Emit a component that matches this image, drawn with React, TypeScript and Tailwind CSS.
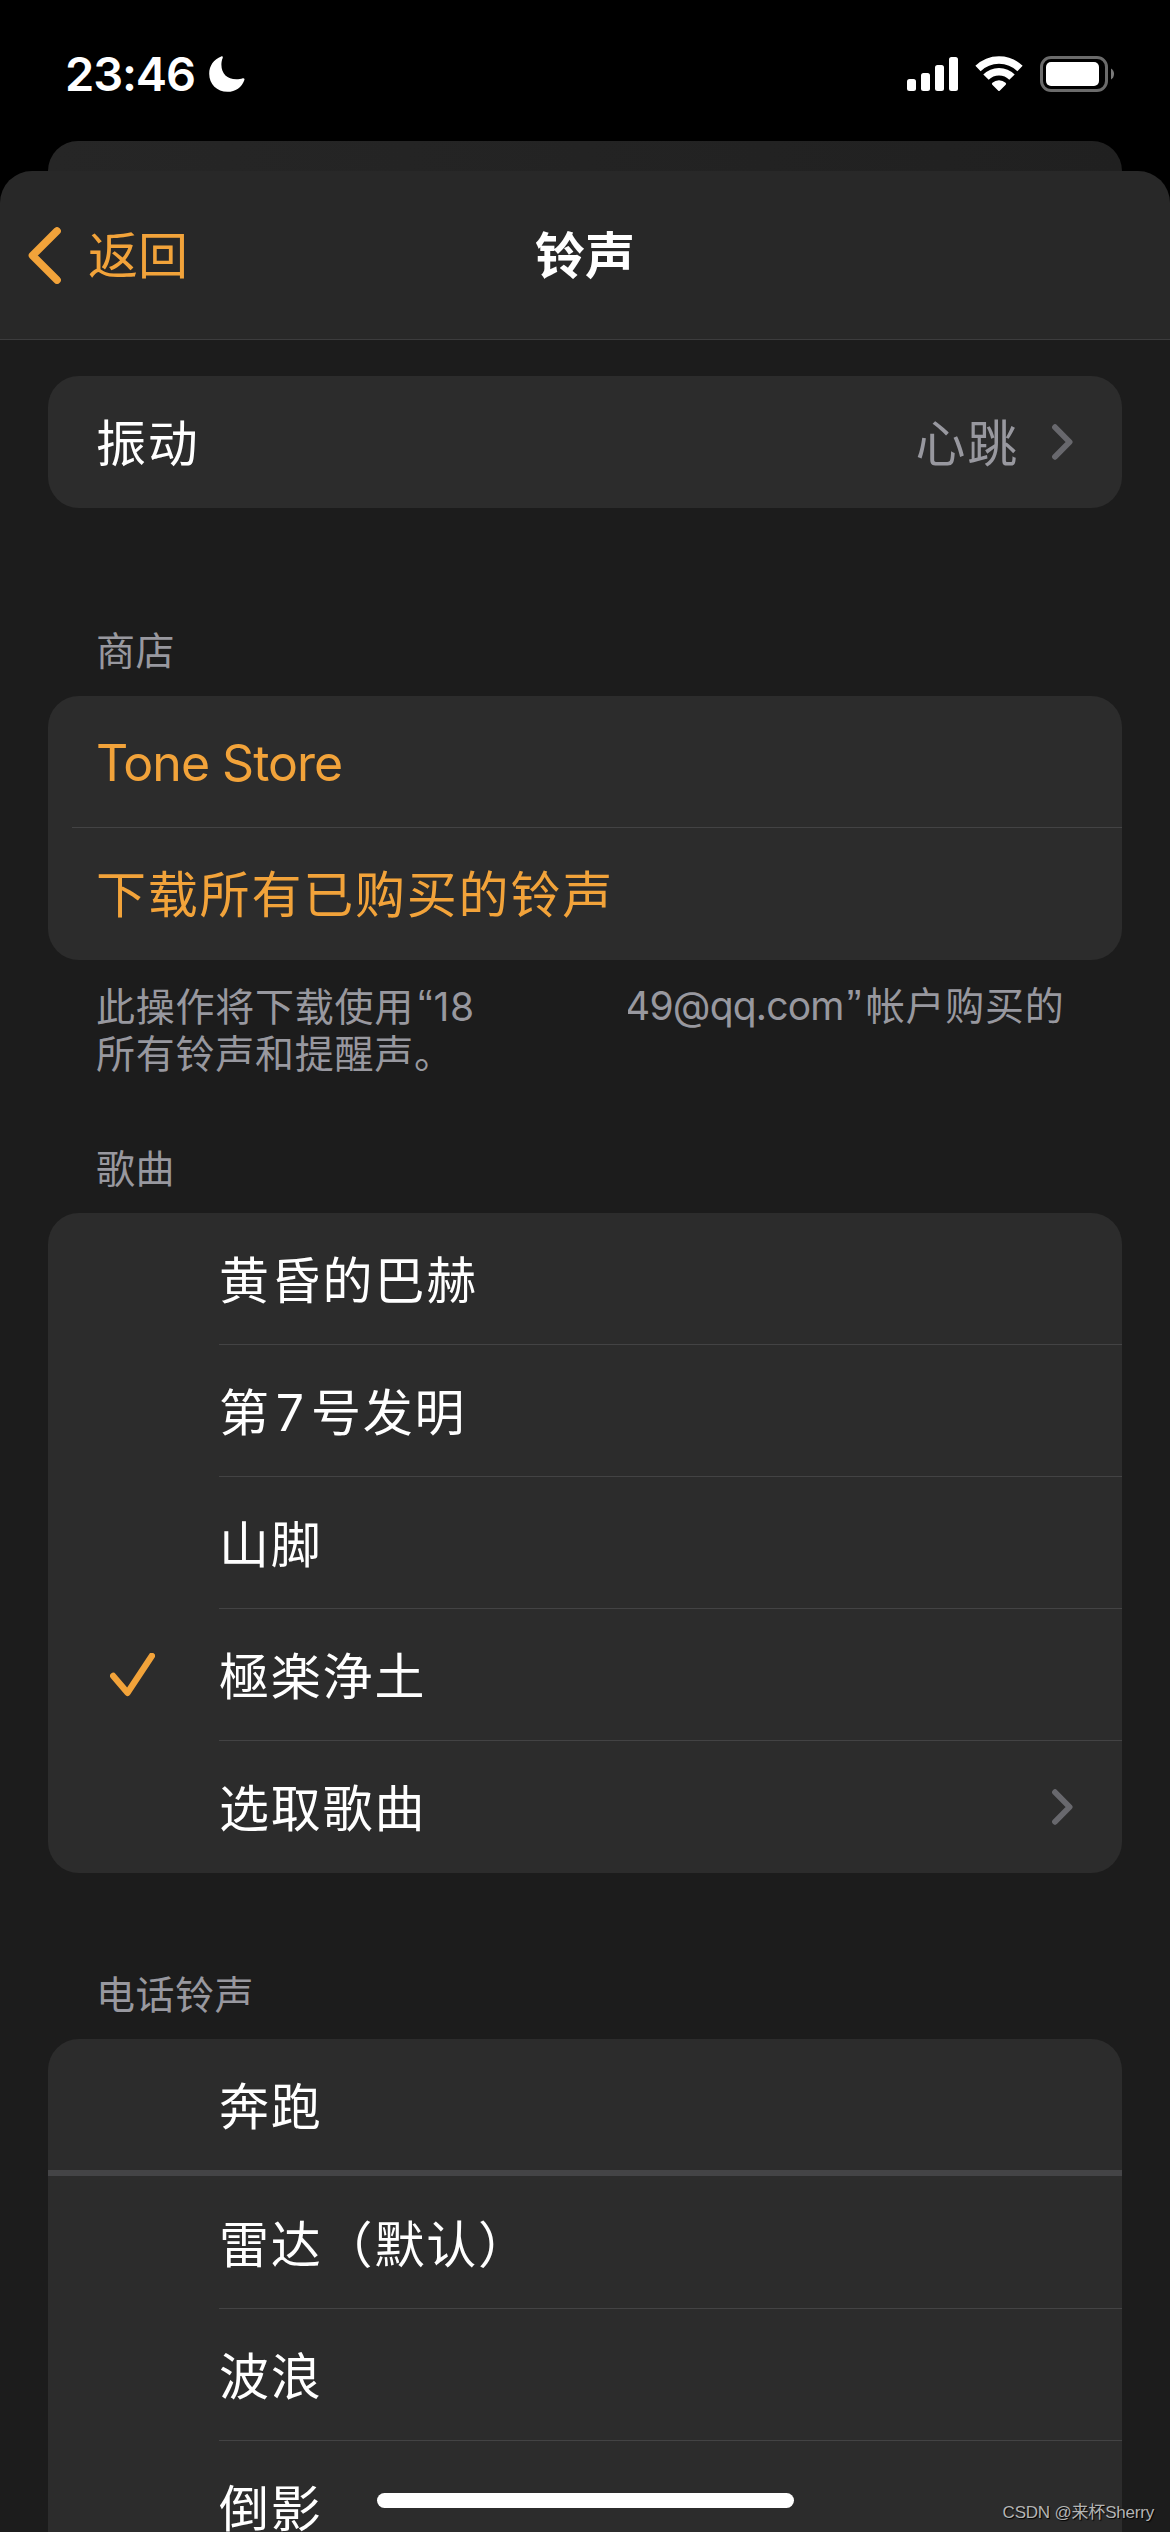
import React from "react";

const separator = "absolute bottom-0 right-0 h-px bg-[#434344]";

function Chevron() {
  return (
    <svg className="h-9 w-[21px] shrink-0" viewBox="0 0 21 36" fill="none">
      <path d="M3 3.200 17.600 18 3 32.800" stroke="#68686d" strokeWidth="5.800" strokeLinecap="round" strokeLinejoin="round" />
    </svg>
  );
}

function Check() {
  return (
    <svg className="h-[44px] w-[45px]" viewBox="0 0 45 44" fill="none">
      <path d="M3.200 23 17.500 39.800 41.800 2.900" stroke="#f2a33a" strokeWidth="6.400" strokeLinecap="round" strokeLinejoin="round" />
    </svg>
  );
}

function SectionTitle({ children }: { children: React.ReactNode }) {
  return <div className="pl-24 text-[39px] leading-[48px] tracking-[0.5px] text-[#98989f]">{children}</div>;
}

function Card({ children, className = "" }: { children: React.ReactNode; className?: string }) {
  return <div className={`mx-12 overflow-hidden rounded-[31px] bg-[#2c2c2c] ${className}`}>{children}</div>;
}

type ToneProps = { name: React.ReactNode; checked?: boolean; more?: boolean; last?: boolean };

function ToneRow({ name, checked, more, last }: ToneProps) {
  return (
    <div className="relative flex h-[132px] items-center pr-[49px]">
      <div className="w-[171px] shrink-0 pl-[62px]">{checked && <Check />}</div>
      <span className="flex-1 pt-[3px] text-white">{name}</span>
      {more && <Chevron />}
      {!last && <div className={`${separator} left-[171px]`} />}
    </div>
  );
}

function StatusBar() {
  return (
    <div className="flex h-[141px] shrink-0 items-start justify-between pl-[65px] pr-[55px] pt-[47px]">
      <div className="flex items-center">
        <span className="w-[144px] text-[47px] font-semibold leading-[54px] tracking-[-1.1px] text-white">23:46</span>
        <svg className="h-9 w-9" viewBox="0 0 36 36">
          <path
            d="M12.200.4C13.300 0 14.200.8 13.700 1.900 12.800 4 12.400 6.300 12.400 8.700 12.400 17.600 18.300 23.300 27.300 23.300 29.800 23.300 32 22.900 33.800 22.300 35 21.900 35.800 22.700 35.400 23.900 32.900 31.100 26.400 35.800 18.500 35.800 8 35.800.2 28.100.2 17.700.2 9.700 5 2.900 12.200.4Z"
            fill="#fff"
          />
        </svg>
      </div>
      <svg className="mt-2 h-[38px] w-[209px]" viewBox="0 0 209 38" fill="none">
        <g fill="#fff">
          <rect x="1" y="24" width="9" height="12" rx="2.500" />
          <rect x="15" y="18" width="9" height="18" rx="2.500" />
          <rect x="29" y="10" width="9" height="26" rx="2.500" />
          <rect x="43" y="2" width="9" height="34" rx="2.500" />
          <path d="M93.700 35.700a1 1 0 0 1-1.400 0L86.300 29.700a1.300 1.300 0 0 1 .1-1.900 9.800 9.800 0 0 1 13.200 0 1.300 1.300 0 0 1 .1 1.900Z" />
        </g>
        <path d="M72 13.500a30 30 0 0 1 42 0" stroke="#fff" strokeWidth="7.500" />
        <path d="M80 22.200a18 18 0 0 1 26 0" stroke="#fff" strokeWidth="7.500" />
        <rect x="135.500" y="2.500" width="65" height="33" rx="9.500" stroke="#6b6b6b" strokeWidth="3" />
        <rect x="140" y="7" width="53" height="24" rx="5" fill="#fff" />
        <path d="M205 13.500a6.500 6.500 0 0 1 0 11Z" fill="#7a7a7a" />
      </svg>
    </div>
  );
}

export default function App() {
  return (
    <div className="relative flex h-[2532px] w-[1170px] flex-col overflow-hidden bg-black font-['Inter','Noto_Sans_CJK_SC',sans-serif] text-[50px] leading-[60px] tracking-[1.8px]">
      <StatusBar />
      <div className="mx-12 h-[30px] shrink-0 rounded-t-[30px] bg-linear-to-r from-[#262626] to-[#202020]" />
      <header className="relative flex h-[169px] shrink-0 items-center justify-center rounded-t-[32px] border-b border-[#3c3c3d] bg-[#282828]">
        <div className="absolute inset-y-0 left-7 flex items-center gap-[27px] text-[#f2a33a]">
          <svg className="h-[57px] w-[33px]" viewBox="0 0 33 57" fill="none">
            <path d="M29 4 4.500 28.500 29 53" stroke="#f2a33a" strokeWidth="7.600" strokeLinecap="round" strokeLinejoin="round" />
          </svg>
          <span className="pt-[2px] tracking-[0px]">返回</span>
        </div>
        <h1 className="pt-[2px] font-bold tracking-[0px] text-white">铃声</h1>
      </header>

      <main className="h-[2192px] shrink-0 overflow-hidden bg-[#1c1c1c] pt-9">
        <Card className="flex h-[132px] items-center pl-12 pr-[49px]">
          <span className="flex-1 pt-[3px] text-white">振动</span>
          <span className="mr-[33px] pt-[3px] text-[#98989f]">心跳</span>
          <Chevron />
        </Card>

        <div className="pt-[119px]">
          <SectionTitle>商店</SectionTitle>
        </div>
        <Card className="mt-[21px] text-[#f2a33a]">
          <div className="relative flex h-[132px] items-center pl-12">
            <span className="pt-[2px] tracking-[-1px]">Tone Store</span>
            <div className={`${separator} left-6`} />
          </div>
          <div className="flex h-[132px] items-center pl-12 pt-[2px]">下载所有已购买的铃声</div>
        </Card>
        <div className="mt-[22px] pl-24 text-[39px] leading-[48px] tracking-[0.75px] text-[#98989f]">
          <div className="flex h-12 whitespace-nowrap">
            <span className="w-[377px] overflow-hidden">
              此操作将下载使用<span className="ml-1 font-['Liberation_Sans'] text-[44px]">“</span>18
            </span>
            <span className="ml-[155px] flex w-[480px] overflow-hidden">
              <span className="-ml-[3px] tracking-[-0.8px]">49@qq.com</span>
              <span className="mr-1 w-[18px] pl-[3px] font-['Liberation_Sans'] text-[44px]">”</span>
              <span>帐户购买的</span>
            </span>
          </div>
          <div>所有铃声和提醒声。</div>
        </div>

        <div className="pt-[67px]">
          <SectionTitle>歌曲</SectionTitle>
        </div>
        <Card className="mt-5">
          <ToneRow name="黄昏的巴赫" />
          <ToneRow
            name={
              <>
                第<span className="mx-[5px]">7</span>号发明
              </>
            }
          />
          <ToneRow name="山脚" />
          <ToneRow name="極楽浄土" checked />
          <ToneRow name="选取歌曲" more last />
        </Card>

        <div className="pt-[98px]">
          <SectionTitle>电话铃声</SectionTitle>
        </div>
        <Card className="mt-5 rounded-b-none">
          <ToneRow name="奔跑" last />
          <div className="-mt-px h-[6px] bg-[#444446]" />
          <div className="pt-px">
            <ToneRow name="雷达（默认）" />
          </div>
          <ToneRow name="波浪" />
          <ToneRow name="倒影" last />
        </Card>
      </main>

      <div className="absolute bottom-6 left-[377px] h-[15px] w-[417px] rounded-full bg-white" />
      <div className="absolute bottom-[7px] right-4 font-['Liberation_Sans','Noto_Sans_CJK_SC',sans-serif] text-[17px] leading-6 tracking-[-0.2px] text-[#b4b4b4] [text-shadow:1px_1px_1px_#000]">
        CSDN @来杯Sherry
      </div>
    </div>
  );
}
